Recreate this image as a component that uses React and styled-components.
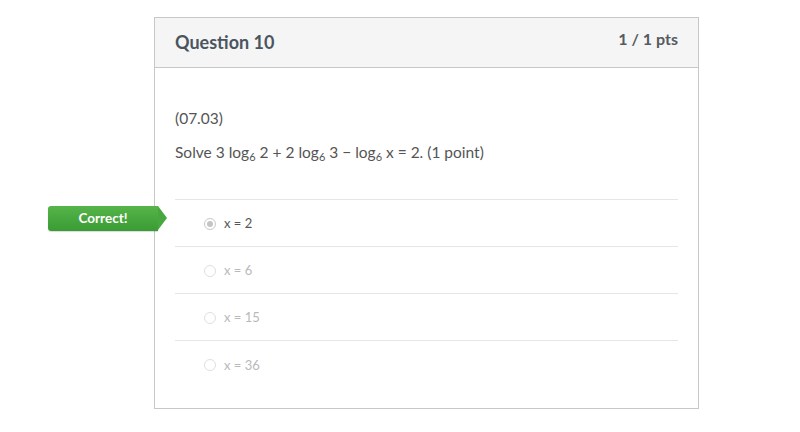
import React from "react";
import styled, { createGlobalStyle } from "styled-components";

const Global = createGlobalStyle`
  html, body { margin: 0; padding: 0; background: #fff; }
  body { font-family: Lato, "Open Sans", "Liberation Sans", sans-serif; }
`;

const Page = styled.div`
  width: 800px;
  height: 432px;
  padding: 17px 0 0 154px;
  box-sizing: border-box;
`;

const Card = styled.div`
  width: 545px;
  border: 1px solid #c7c7c7;
  box-sizing: border-box;
  background: #fff;
`;

const Header = styled.div`
  height: 50px;
  box-sizing: border-box;
  background: #f5f5f5;
  border-bottom: 1px solid #c7c7c7;
  display: flex;
  align-items: center;
  justify-content: space-between;
  padding: 0 20px 2px 20px;
`;

const Title = styled.div`
  font-size: 18px;
  font-weight: 700;
  color: #4b5560;
`;

const Points = styled.div`
  font-size: 16px;
  font-weight: 700;
  color: #555b61;
  margin-top: -6px;
`;

const Body = styled.div`
  padding: 39px 20px 20px 20px;
`;

const Para = styled.p`
  margin: 0 0 12px 0;
  font-size: 15.5px;
  line-height: 22px;
  color: #555;
`;

const Sub = styled.sub`
  font-size: 11px;
  vertical-align: -3px;
  line-height: 0;
`;

const Answers = styled.div`
  margin-top: 36px;
  border-top: 1px solid #e6e6e6;
`;

const Row = styled.div`
  position: relative;
  height: 47px;
  box-sizing: border-box;
  display: flex;
  align-items: center;
  padding-left: 29px;
  gap: 8px;
  border-bottom: ${(p) => (p.$last ? "none" : "1px solid #e6e6e6")};
`;

const Radio = styled.span`
  width: 10px;
  height: 10px;
  border-radius: 50%;
  border: 1px solid ${(p) => (p.$checked ? "#c8c8c8" : "#e0e0e0")};
  background: #fff;
  display: flex;
  align-items: center;
  justify-content: center;
  flex: none;
  margin-top: 1px;
  &::after {
    content: "";
    width: 6px;
    height: 6px;
    border-radius: 50%;
    background: ${(p) => (p.$checked ? "#c4c4c4" : "transparent")};
  }
`;

const AnswerText = styled.span`
  font-size: 13px;
  color: ${(p) => (p.$dim ? "#b9b9b9" : "#555")};
`;

const Badge = styled.div`
  position: absolute;
  left: -127px;
  top: 6px;
  width: 110px;
  height: 25px;
  box-sizing: border-box;
  background: linear-gradient(#55b54a, #3b9b34);
  border-radius: 3px 0 0 3px;
  box-shadow: 0 1px 1px rgba(0, 0, 0, 0.15);
  color: #fff;
  font-size: 13.5px;
  font-weight: 700;
  display: flex;
  align-items: center;
  justify-content: center;
  padding-bottom: 2px;
  &::after {
    content: "";
    position: absolute;
    right: -9px;
    top: 0;
    border-top: 12.5px solid transparent;
    border-bottom: 12.5px solid transparent;
    border-left: 9px solid #48a83f;
  }
`;

const answers = [
  { t: "x = 2", checked: true },
  { t: "x = 6" },
  { t: "x = 15" },
  { t: "x = 36" },
];

export default function App() {
  return (
    <>
      <Global />
      <Page>
        <Card>
          <Header>
            <Title>Question 10</Title>
            <Points>1 / 1 pts</Points>
          </Header>
          <Body>
            <Para>(07.03)</Para>
            <Para>
              Solve 3 log<Sub>6</Sub> 2 + 2 log<Sub>6</Sub> 3 − log<Sub>6</Sub> x = 2. (1 point)
            </Para>
            <Answers>
              {answers.map((a, i) => (
                <Row key={a.t} $last={i === answers.length - 1}>
                  {a.checked && <Badge>Correct!</Badge>}
                  <Radio $checked={a.checked} />
                  <AnswerText $dim={!a.checked}>{a.t}</AnswerText>
                </Row>
              ))}
            </Answers>
          </Body>
        </Card>
      </Page>
    </>
  );
}
